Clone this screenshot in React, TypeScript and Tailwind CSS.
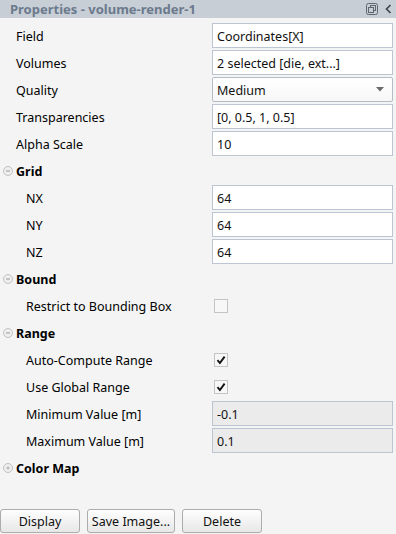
type Row =
  | { kind: 'input'; label: string; value: string; child?: boolean; disabled?: boolean }
  | { kind: 'select'; label: string; value: string }
  | { kind: 'check'; label: string; checked: boolean; child?: boolean }
  | { kind: 'section'; label: string; open: boolean };

const rows: Row[] = [
  { kind: 'input', label: 'Field', value: 'Coordinates[X]' },
  { kind: 'input', label: 'Volumes', value: '2 selected [die, ext...]' },
  { kind: 'select', label: 'Quality', value: 'Medium' },
  { kind: 'input', label: 'Transparencies', value: '[0, 0.5, 1, 0.5]' },
  { kind: 'input', label: 'Alpha Scale', value: '10' },
  { kind: 'section', label: 'Grid', open: true },
  { kind: 'input', label: 'NX', value: '64', child: true },
  { kind: 'input', label: 'NY', value: '64', child: true },
  { kind: 'input', label: 'NZ', value: '64', child: true },
  { kind: 'section', label: 'Bound', open: true },
  { kind: 'check', label: 'Restrict to Bounding Box', checked: false, child: true },
  { kind: 'section', label: 'Range', open: true },
  { kind: 'check', label: 'Auto-Compute Range', checked: true, child: true },
  { kind: 'check', label: 'Use Global Range', checked: true, child: true },
  { kind: 'input', label: 'Minimum Value [m]', value: '-0.1', child: true, disabled: true },
  { kind: 'input', label: 'Maximum Value [m]', value: '0.1', child: true, disabled: true },
  { kind: 'section', label: 'Color Map', open: false },
];

const SectionIcon = ({ open }: { open: boolean }) => (
  <svg width="10" height="10" viewBox="0 0 10 10" className="shrink-0">
    <circle cx="5" cy="5" r="4.5" fill="#eeeeee" stroke="#c2c2c2" />
    {open ? (
      <path d="M3 5h4" stroke="#9a9a9a" strokeWidth="1" />
    ) : (
      <path d="M3.5 5h3M5 3.5v3" stroke="#a8a8a8" strokeWidth="1" />
    )}
  </svg>
);

const Check = () => (
  <svg width="10" height="10" viewBox="0 0 10 10">
    <path d="M1.5 5.2l2.4 2.8L8.6 1.6" fill="none" stroke="#111" strokeWidth="1.9" />
  </svg>
);

const PropRow = ({ row }: { row: Row }) => {
  if (row.kind === 'section') {
    return (
      <div className="h-[27px] flex items-center">
        <div className="w-[16px] flex justify-end pr-[3px]">
          <SectionIcon open={row.open} />
        </div>
        <span className="pt-[4px] font-bold text-black">{row.label}</span>
      </div>
    );
  }

  const child = 'child' in row && row.child;

  return (
    <div className="h-[27px] grid grid-cols-[212px_181px] items-center">
      <span className={`pt-[4px] text-black ${child ? 'pl-[26px]' : 'pl-[16px]'}`}>{row.label}</span>
      {row.kind === 'input' && (
        <div
          className={`h-[25px] flex items-center px-[4px] border border-[#bcc6d2] text-[#111] ${
            row.disabled ? 'bg-[#ebebeb]' : 'bg-white'
          }`}
        >
          <span className="pt-[4px]">{row.value}</span>
        </div>
      )}
      {row.kind === 'select' && (
        <div className="h-[25px] flex items-center justify-between px-[4px] border border-[#b4bcc6] rounded-[2px] bg-gradient-to-b from-white to-[#f7f7f7] text-[#111]">
          <span className="pt-[4px]">{row.value}</span>
          <svg width="8" height="5" viewBox="0 0 8 5" className="mr-[4px]">
            <path d="M0 0h8L4 4.5z" fill="#6a6a6a" />
          </svg>
        </div>
      )}
      {row.kind === 'check' && (
        <div className="pl-[2px]">
          <div className="w-[14px] h-[14px] border border-[#c4c4c4] bg-[#f7f7f7] flex items-center justify-center">
            {row.checked && <Check />}
          </div>
        </div>
      )}
    </div>
  );
};

const Button = ({ label, w }: { label: string; w: string }) => (
  <button
    className={`${w} h-[24px] border border-[#acacac] rounded-[3px] bg-gradient-to-b from-[#fefefe] to-[#e7e7e7] text-[#111] flex items-center justify-center`}
  >
    <span className="pt-[3px]">{label}</span>
  </button>
);

export default function App() {
  return (
    <div
      className="w-[396px] h-[534px] bg-[#f4f4f4] flex flex-col text-[12.5px] leading-none overflow-hidden"
      style={{ fontFamily: '"Noto Sans", "Open Sans", sans-serif' }}
    >
      <div className="h-[18px] shrink-0 bg-[#c8ced5] flex items-center justify-between pl-[10px] pr-[4px]">
        <span className="font-bold text-[13px] text-[#6b7a8d]">Properties - volume-render-1</span>
        <div className="flex items-center gap-[7px]">
          <svg width="12" height="12" viewBox="0 0 12 12">
            <rect x="0.5" y="0.5" width="11" height="11" rx="2" fill="none" stroke="#5f6670" />
            <rect x="4.5" y="2.5" width="5" height="5" fill="none" stroke="#5f6670" />
            <rect x="2.5" y="4.5" width="5" height="5" fill="#c8ced5" stroke="#5f6670" />
          </svg>
          <svg width="7" height="10" viewBox="0 0 7 10">
            <path d="M5.5 1L1.5 5l4 4" fill="none" stroke="#3d434a" strokeWidth="1.6" />
          </svg>
        </div>
      </div>

      <div className="pt-[4px] flex flex-col">
        {rows.map((r) => (
          <PropRow key={r.label} row={r} />
        ))}
      </div>

      <div className="mt-auto mb-[1px] flex gap-[7px]">
        <Button label="Display" w="w-[80px]" />
        <Button label="Save Image..." w="w-[88px]" />
        <Button label="Delete" w="w-[80px]" />
      </div>
    </div>
  );
}
